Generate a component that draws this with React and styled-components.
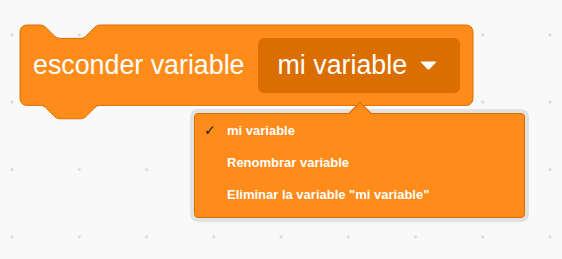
import React from "react";
import styled, { createGlobalStyle } from "styled-components";

const SCALE = 1.675;
const BLOCK_W = 453;
const BLOCK_H = 80.4;

const GlobalStyle = createGlobalStyle`
  html, body {
    margin: 0;
    padding: 0;
  }
  body {
    background-color: #f9f9f9;
    font-family: "Liberation Sans", Arial, Helvetica, sans-serif;
  }
`;

const Workspace = styled.div`
  position: relative;
  width: 562px;
  height: 259px;
  overflow: hidden;
  box-sizing: border-box;
  padding: 25px 0 0 20px;
  background-color: #f9f9f9;
  background-image: radial-gradient(circle, #d6d6d6 1.2px, transparent 1.8px);
  background-size: 67.25px 67.25px;
  background-position: -21.6px 1.4px;
`;

const Block = styled.div`
  position: relative;
  width: ${BLOCK_W}px;
  height: ${BLOCK_H}px;
  box-sizing: border-box;
  display: flex;
  align-items: center;
  gap: 13px;
  padding: 0 13px;
`;

const BlockShape = styled.svg`
  position: absolute;
  left: 0;
  top: 0;
  overflow: visible;
  z-index: 0;
`;

const Label = styled.span`
  position: relative;
  z-index: 1;
  color: #ffffff;
  font-size: 26.8px;
  line-height: 1;
  white-space: nowrap;
`;

const Field = styled.div`
  position: relative;
  z-index: 1;
  width: 202px;
  height: 55px;
  box-sizing: border-box;
  display: flex;
  align-items: center;
  gap: 13px;
  padding: 0 22px 0 20px;
  background: #db6e00;
  border-radius: 6px;
`;

const Menu = styled.div`
  position: absolute;
  left: 194px;
  top: 113px;
  width: 331px;
  height: 105px;
  box-sizing: border-box;
  padding: 0 0 8px;
  background: #ff8c1a;
  border: 1px solid #db6e00;
  border-radius: 4px;
  box-shadow: 0 0 0 4px rgba(0, 0, 0, 0.09);
  z-index: 5;
`;

const MenuArrow = styled.div`
  position: absolute;
  left: 157px;
  top: -9px;
  width: 16px;
  height: 16px;
  background: #ff8c1a;
  border-top: 1px solid #db6e00;
  border-left: 1px solid #db6e00;
  transform: rotate(45deg);
  box-sizing: border-box;
`;

const Item = styled.div`
  position: relative;
  height: 32px;
  display: flex;
  align-items: center;
  padding-left: 32px;
  color: #ffffff;
  font-size: 13px;
  font-weight: bold;
  white-space: nowrap;
`;

const Check = styled.span`
  position: absolute;
  left: 9px;
  top: 50%;
  transform: translateY(-50%);
  color: #1e1e1e;
  font-family: "DejaVu Sans", sans-serif;
  font-size: 14px;
  font-weight: normal;
`;

const notch = "c 2 0 3 1 4 2 l 4 4 c 1 1 2 2 4 2 h 12 c 2 0 3 -1 4 -2 l 4 -4 c 1 -1 2 -2 4 -2";
const notchBack = "c -2 0 -3 1 -4 2 l -4 4 c -1 1 -2 2 -4 2 h -12 c -2 0 -3 -1 -4 -2 l -4 -4 c -1 -1 -2 -2 -4 -2";

function blockPath(w, h) {
  return `M 0 4 A 4 4 0 0 1 4 0 H 12 ${notch} H ${w - 4} a 4 4 0 0 1 4 4 V ${h - 4} a 4 4 0 0 1 -4 4 H 48 ${notchBack} H 4 a 4 4 0 0 1 -4 -4 z`;
}

const DropArrow = () => (
  <svg width="17" height="9" viewBox="0 0 17 9">
    <path
      d="M1.6 0.4 H15.4 Q16.9 0.4 15.9 1.6 L9.4 8.2 Q8.5 9 7.6 8.2 L1.1 1.6 Q0.1 0.4 1.6 0.4 Z"
      fill="#ffffff"
    />
  </svg>
);

const items = [
  { label: "mi variable", checked: true },
  { label: "Renombrar variable" },
  { label: "Eliminar la variable \"mi variable\"" },
];

export default function App() {
  const w = BLOCK_W / SCALE;
  const h = BLOCK_H / SCALE;
  return (
    <>
      <GlobalStyle />
      <Workspace>
        <Block>
          <BlockShape
            width={BLOCK_W}
            height={BLOCK_H + 8 * SCALE}
            viewBox={`0 0 ${w} ${h + 8}`}
          >
            <path
              d={blockPath(w, h)}
              fill="#ff8c1a"
              stroke="#db6e00"
              strokeWidth="1"
              vectorEffect="non-scaling-stroke"
            />
          </BlockShape>
          <Label>esconder variable</Label>
          <Field>
            <Label>mi variable</Label>
            <DropArrow />
          </Field>
        </Block>
        <Menu>
          <MenuArrow />
          {items.map((it) => (
            <Item key={it.label}>
              {it.checked && <Check>✓</Check>}
              {it.label}
            </Item>
          ))}
        </Menu>
      </Workspace>
    </>
  );
}
